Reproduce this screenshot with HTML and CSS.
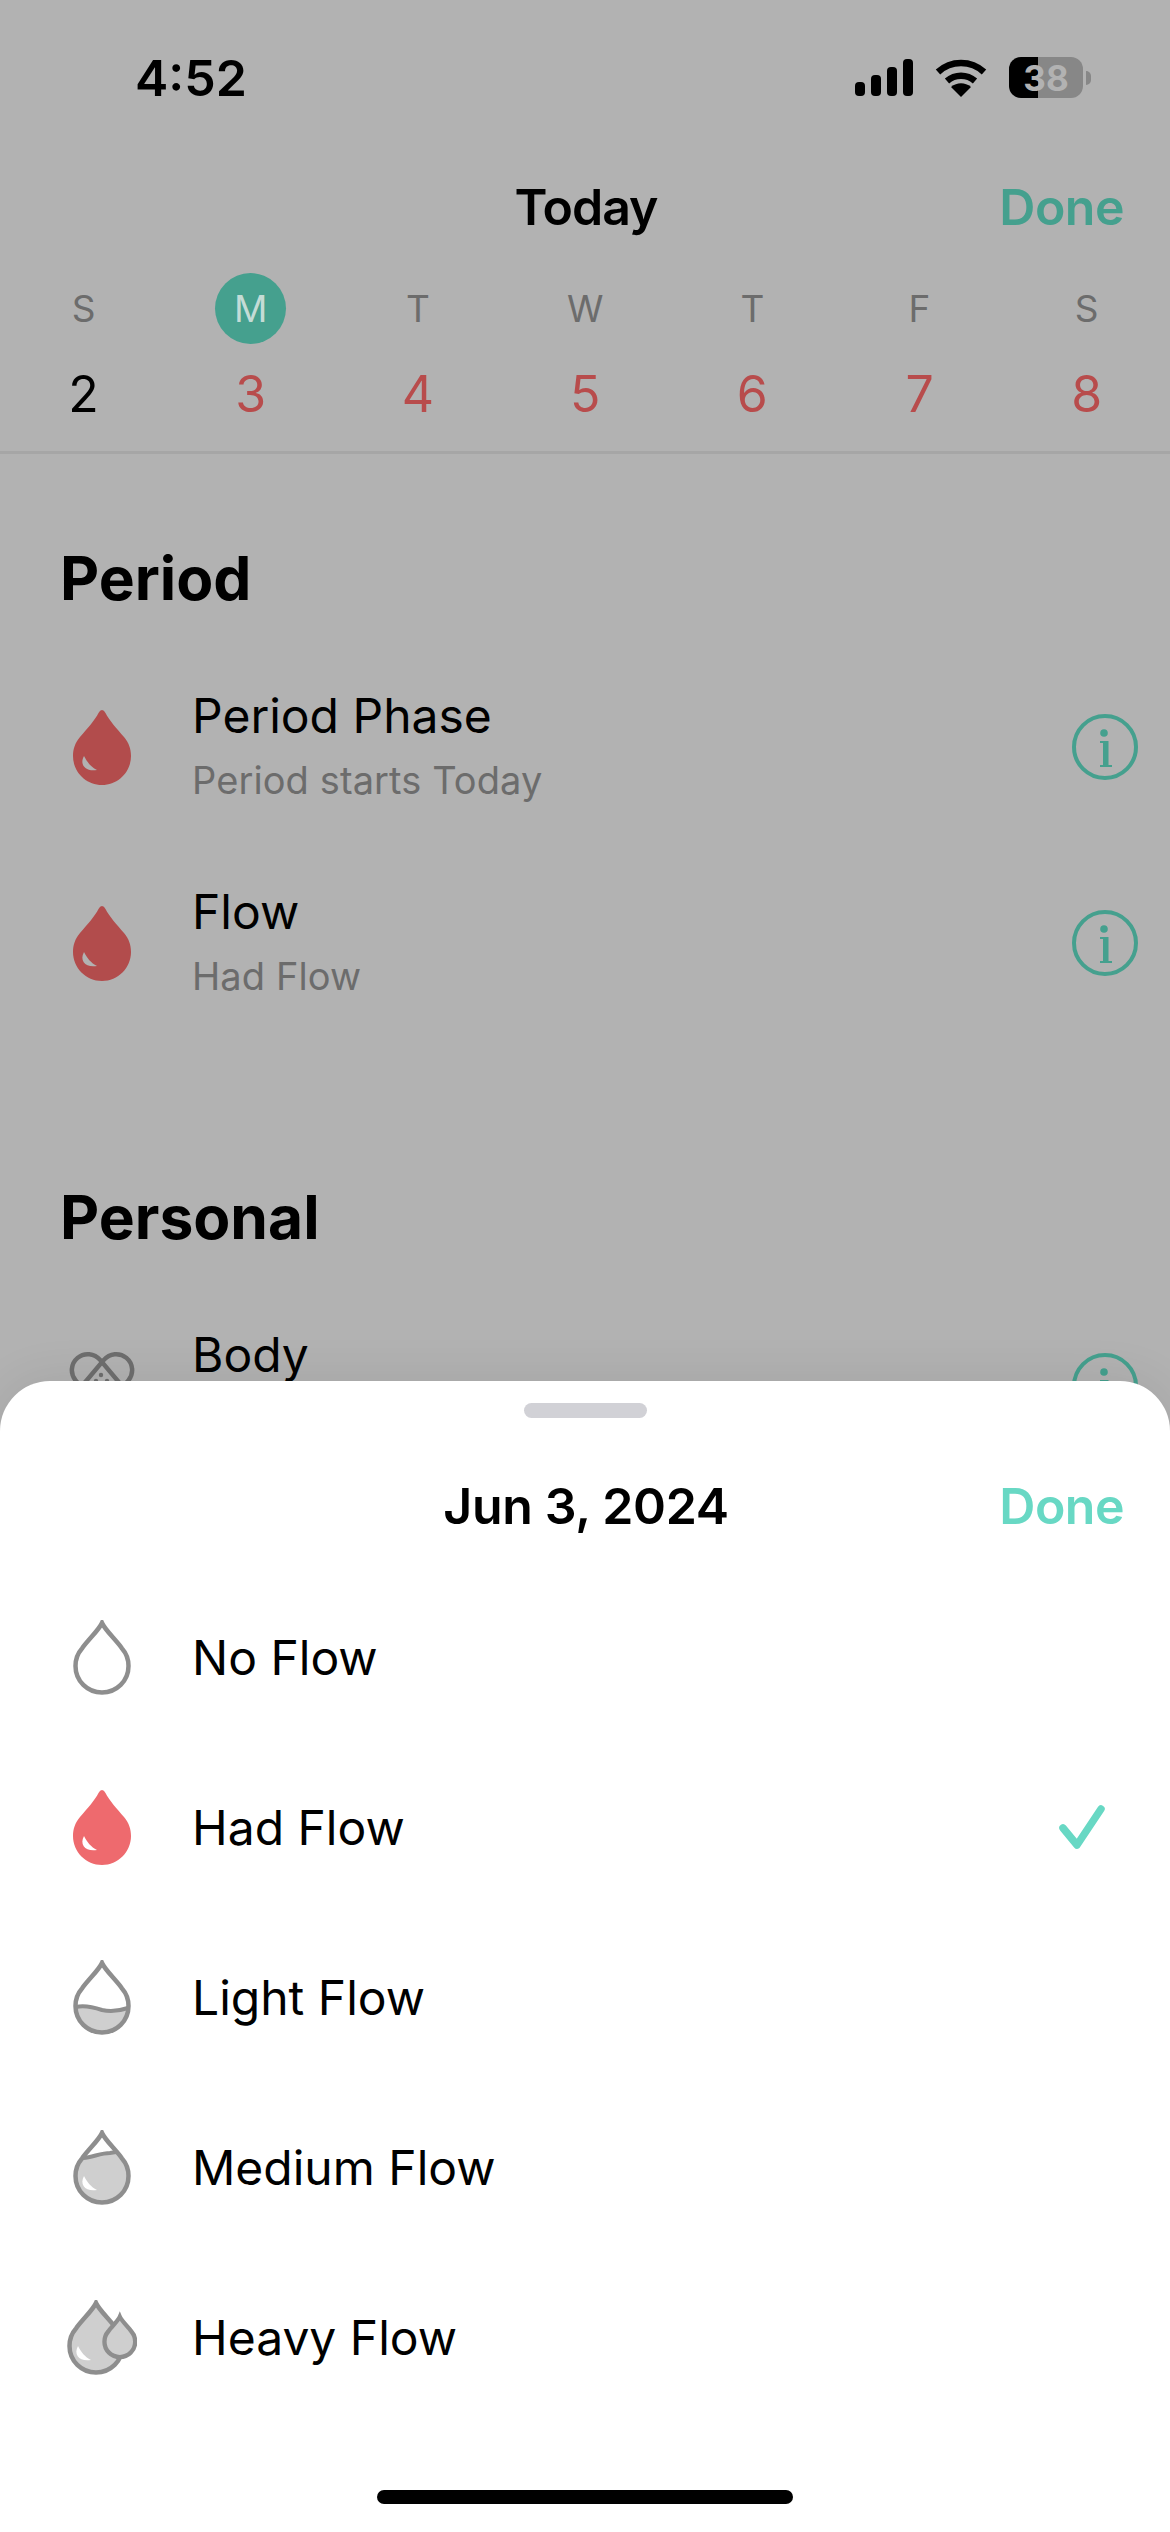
FILE: index.html
```html
<!DOCTYPE html>
<html lang="en">
<head>
    <meta charset="UTF-8">
    <meta name="viewport" content="width=device-width, initial-scale=1.0">
    <title>Log Flow</title>
    <link rel="stylesheet" href="styles.css">
</head>
<body>

    <!-- shared shapes -->
    <svg class="defs" width="0" height="0">
        <defs>
            <path id="drop" d="M29 0 Q31 0 32.5 3 C36 10 44 19 51 27 C56 33 58 39 58 46 C58 62 45 75 29 75 C13 75 0 62 0 46 C0 39 2 33 7 27 C14 19 22 10 25.5 3 Q27 0 29 0Z"/>
            <path id="drop-line" d="M29 3 C32 10 44 21 49 28.5 C53 33 55.500 39 55.500 46 C55.500 61 43.500 72.500 29 72.500 C14.500 72.500 2.500 61 2.500 46 C2.500 39 5 33 9 28.500 C14 21 26 10 29 3Z"/>
            <path id="shine" d="M11 46 C6 55 13 62 24 60 C18 57 14 52 11 46Z"/>
            <g id="info">
                <circle cx="33" cy="33" r="31" fill="none" stroke="currentColor" stroke-width="4"/>
                <circle cx="32" cy="19" r="3.800" fill="currentColor"/>
                <path d="M28 27 H36.500 V51 H40 V53 H28 V51 H31 V29 H28Z" fill="currentColor"/>
            </g>
        </defs>
    </svg>

    <div class="screen">
        <header class="status-bar">
            <span class="time">4:52</span>
            <div class="status-icons">
                <svg class="signal" width="58" height="37" viewBox="0 0 58 37">
                    <rect x="0" y="23" width="10" height="14" rx="4"/>
                    <rect x="16" y="16" width="10" height="21" rx="4"/>
                    <rect x="32" y="8" width="10" height="29" rx="4"/>
                    <rect x="48" y="0" width="10" height="37" rx="4"/>
                </svg>
                <svg class="wifi" width="52" height="38" viewBox="0 0 52 38">
                    <path d="M3 13 C16 1 36 1 49 13" fill="none" stroke="#000" stroke-width="6.500"/>
                    <path d="M12 22 C20 15 32 15 40 22" fill="none" stroke="#000" stroke-width="6.500"/>
                    <path d="M16 28 C22 23 30 23 36 28 L26 38Z" fill="#000"/>
                </svg>
                <div class="battery">
                    <div class="battery-body"><span>38</span></div>
                    <div class="battery-nub"></div>
                </div>
            </div>
        </header>

        <nav class="nav">
            <span></span>
            <span class="nav-title">Today</span>
            <span class="done">Done</span>
        </nav>

        <div class="week">
            <div class="day"><span class="day-letter">S</span><span class="day-num">2</span></div>
            <div class="day"><span class="day-letter selected">M</span><span class="day-num red">3</span></div>
            <div class="day"><span class="day-letter">T</span><span class="day-num red">4</span></div>
            <div class="day"><span class="day-letter">W</span><span class="day-num red">5</span></div>
            <div class="day"><span class="day-letter">T</span><span class="day-num red">6</span></div>
            <div class="day"><span class="day-letter">F</span><span class="day-num red">7</span></div>
            <div class="day"><span class="day-letter">S</span><span class="day-num red">8</span></div>
        </div>

        <section class="section">
            <h2>Period</h2>
            <div class="log-row">
                <div class="icon-cell">
                    <svg width="58" height="75" viewBox="0 0 58 75"><use href="#drop" fill="#b24c4c"/><use href="#shine" fill="#b2b2b2"/></svg>
                </div>
                <div class="log-text">
                    <div class="log-title">Period Phase</div>
                    <div class="log-sub">Period starts Today</div>
                </div>
                <svg class="info" width="66" height="66" viewBox="0 0 66 66"><use href="#info"/></svg>
            </div>
            <div class="log-row">
                <div class="icon-cell">
                    <svg width="58" height="75" viewBox="0 0 58 75"><use href="#drop" fill="#b24c4c"/><use href="#shine" fill="#b2b2b2"/></svg>
                </div>
                <div class="log-text">
                    <div class="log-title">Flow</div>
                    <div class="log-sub">Had Flow</div>
                </div>
                <svg class="info" width="66" height="66" viewBox="0 0 66 66"><use href="#info"/></svg>
            </div>
        </section>

        <section class="section section-personal">
            <h2>Personal</h2>
            <div class="log-row">
                <div class="icon-cell">
                    <svg width="66" height="72" viewBox="0 0 66 72" fill="none" stroke="#6e6e6e" stroke-width="4.500">
                        <rect x="-5" y="21" width="76" height="32" rx="16" transform="rotate(50 33 37)"/>
                        <rect x="-5" y="21" width="76" height="32" rx="16" transform="rotate(-50 33 37)"/>
                        <g fill="#6e6e6e" stroke="none">
                            <circle cx="32" cy="25" r="2.200"/>
                            <circle cx="27" cy="31" r="2.200"/>
                            <circle cx="38" cy="31" r="2.200"/>
                        </g>
                    </svg>
                </div>
                <div class="log-text">
                    <div class="log-title">Body</div>
                </div>
                <svg class="info" width="66" height="66" viewBox="0 0 66 66"><use href="#info"/></svg>
            </div>
        </section>
    </div>

    <!-- bottom sheet over the dimmed page -->
    <div class="sheet">
        <div class="handle"></div>
        <div class="sheet-header">
            <span></span>
            <span class="sheet-title">Jun 3, 2024</span>
            <span class="done done-bright">Done</span>
        </div>

        <div class="flow-list">
            <div class="flow-row">
                <div class="icon-cell">
                    <svg width="58" height="75" viewBox="0 0 58 75"><use href="#drop-line" fill="none" stroke="#8e8e8e" stroke-width="4.500"/></svg>
                </div>
                <span class="flow-name">No Flow</span>
            </div>
            <div class="flow-row">
                <div class="icon-cell">
                    <svg width="58" height="75" viewBox="0 0 58 75"><use href="#drop" fill="#ee6a6e"/><use href="#shine" fill="#fff"/></svg>
                </div>
                <span class="flow-name">Had Flow</span>
                <svg class="check" width="46" height="44" viewBox="0 0 46 44">
                    <path d="M4 23 L18 40 L42 4" fill="none" stroke="#68d8c4" stroke-width="7.500" stroke-linecap="round" stroke-linejoin="round"/>
                </svg>
            </div>
            <div class="flow-row">
                <div class="icon-cell">
                    <svg width="58" height="75" viewBox="0 0 58 75">
                        <path d="M3 47 C12 45 20 47 29 50 C38 52 46 51 55 48 C54 63 44 73 29 73 C14 73 4 62 3 47Z" fill="#cfcfcf"/>
                        <path d="M3 47 C12 45 20 47 29 50 C38 52 46 51 55 48" fill="none" stroke="#8e8e8e" stroke-width="4"/>
                        <use href="#drop-line" fill="none" stroke="#8e8e8e" stroke-width="4.500"/>
                    </svg>
                </div>
                <span class="flow-name">Light Flow</span>
            </div>
            <div class="flow-row">
                <div class="icon-cell">
                    <svg width="58" height="75" viewBox="0 0 58 75">
                        <path d="M10 28 C20 27 28 23 37 23 L43 22 C50 29 56 37 56 46 C56 62 44 73 29 73 C14 73 2 61 2 46 C2 39 6 33 10 28Z" fill="#cfcfcf"/>
                        <path d="M10 28 C20 27 28 23 37 23 L43 22" fill="none" stroke="#8e8e8e" stroke-width="4"/>
                        <use href="#drop-line" fill="none" stroke="#8e8e8e" stroke-width="4.500"/>
                        <use href="#shine" fill="#fff"/>
                    </svg>
                </div>
                <span class="flow-name">Medium Flow</span>
            </div>
            <div class="flow-row">
                <div class="icon-cell">
                    <svg width="70" height="75" viewBox="0 0 70 75">
                        <use href="#drop-line" fill="#cfcfcf" stroke="#8e8e8e" stroke-width="4.500"/>
                        <use href="#shine" fill="#fff"/>
                        <use href="#drop-line" transform="translate(36 15) scale(.58)" fill="#cfcfcf" stroke="#8e8e8e" stroke-width="7.500"/>
                    </svg>
                </div>
                <span class="flow-name">Heavy Flow</span>
            </div>
        </div>

        <div class="home-bar"></div>
    </div>

</body>
</html>
```

FILE: styles.css
```css
body {
    margin: 0;
    width: 1170px;
    height: 2532px;
    position: relative;
    overflow: hidden;
    font-family: Inter, "Liberation Sans", sans-serif;
    color: #000;
    background-color: #b2b2b2;
}
.defs {
    position: absolute;
}
.screen {
    display: flex;
    flex-direction: column;
}
.status-bar {
    height: 155px;
    display: flex;
    align-items: center;
    justify-content: space-between;
    padding: 0 79px 0 135px;
}
.time {
    font-size: 50px;
    font-weight: 600;
}
.status-icons {
    display: flex;
    align-items: center;
    gap: 22px;
}
.battery {
    display: flex;
    align-items: center;
    gap: 3px;
}
.battery-body {
    width: 74px;
    height: 41px;
    border-radius: 12px;
    background: linear-gradient(90deg, #000 0 39%, #878787 39% 100%);
    display: flex;
    align-items: center;
    justify-content: center;
    color: #b2b2b2;
    font-size: 35px;
    font-weight: 700;
}
.battery-nub {
    width: 5px;
    height: 14px;
    border-radius: 0 7px 7px 0;
    background-color: #878787;
}
.nav {
    height: 104px;
    display: grid;
    grid-template-columns: 1fr auto 1fr;
    align-items: center;
    padding: 0 46px 0 48px;
}
.nav-title {
    font-size: 50px;
    font-weight: 600;
    letter-spacing: -1px;
}
.done {
    justify-self: end;
    font-size: 50px;
    font-weight: 600;
    letter-spacing: -0.5px;
    color: #45a08e;
}
.done-bright {
    color: #68d8c4;
}
.week {
    margin-top: 14px;
    display: grid;
    grid-template-columns: repeat(7, 167.200px);
    padding-bottom: 27px;
    border-bottom: 3px solid #a6a6a6;
}
.day {
    display: flex;
    flex-direction: column;
    align-items: center;
    gap: 20px;
}
.day-letter {
    width: 71px;
    height: 71px;
    border-radius: 50%;
    display: flex;
    align-items: center;
    justify-content: center;
    font-size: 37px;
    color: #6c6c6c;
}
.day-letter.selected {
    background-color: #45a08e;
    color: #c4dcd6;
}
.day-num {
    height: 60px;
    line-height: 60px;
    font-size: 50px;
}
.red {
    color: #b84c4c;
}
.section {
    padding-top: 84px;
}
.section-personal {
    padding-top: 136px;
}
.section h2 {
    margin: 0 0 31px 60px;
    height: 80px;
    line-height: 80px;
    font-size: 60.500px;
    font-weight: 700;
}
.log-row {
    height: 196px;
    display: flex;
    align-items: center;
    padding: 0 32px 0 62px;
}
.icon-cell {
    width: 80px;
    margin-right: 50px;
    display: flex;
    justify-content: center;
    flex-shrink: 0;
}
.log-text {
    flex: 1;
    min-height: 123px;
}
.log-title {
    height: 60px;
    line-height: 60px;
    font-size: 48px;
    margin-bottom: 11px;
}
.log-sub {
    height: 46px;
    line-height: 46px;
    font-size: 38px;
    letter-spacing: 0.1px;
    color: #6c6c6c;
}
.info {
    color: #45a08e;
}
.sheet {
    position: absolute;
    left: 0;
    right: 0;
    top: 1381px;
    bottom: 0;
    background-color: #fff;
    border-radius: 50px 50px 0 0;
    box-shadow: 0 0 50px rgba(0, 0, 0, 0.09);
    display: flex;
    flex-direction: column;
}
.handle {
    width: 123px;
    height: 15px;
    margin: 22px auto 0;
    border-radius: 8px;
    background-color: #d1d1d6;
}
.sheet-header {
    margin-top: 34px;
    height: 108px;
    display: grid;
    grid-template-columns: 1fr auto 1fr;
    align-items: center;
    padding: 0 46px 0 48px;
}
.sheet-title {
    font-size: 50px;
    font-weight: 600;
    letter-spacing: -0.3px;
}
.flow-list {
    margin-top: 12px;
}
.flow-row {
    height: 170px;
    display: flex;
    align-items: center;
    padding: 0 65px 0 62px;
}
.flow-name {
    flex: 1;
    font-size: 48px;
}
.home-bar {
    width: 416px;
    height: 14px;
    margin: 68px auto 0;
    border-radius: 7px;
    background-color: #000;
}
```
